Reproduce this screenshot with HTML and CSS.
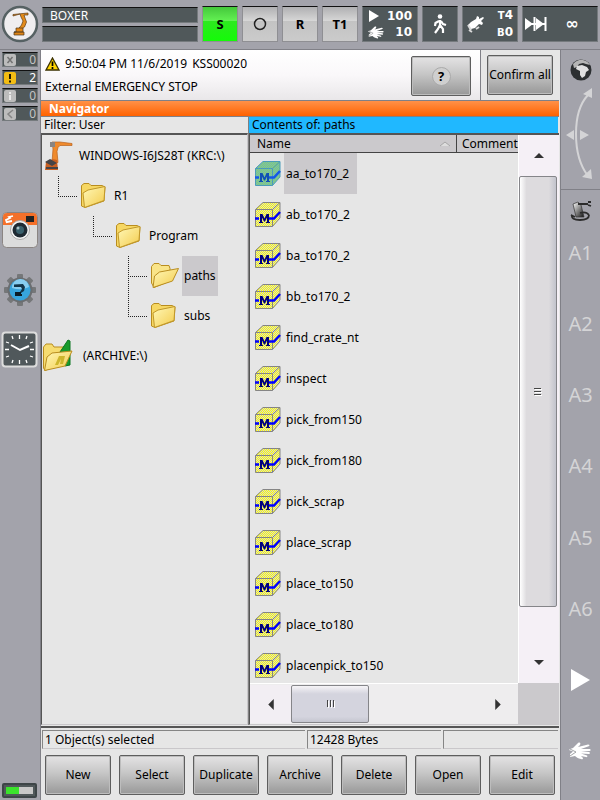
FILE: index.html
```html
<!DOCTYPE html>
<html lang="en">
<head>
<meta charset="utf-8">
<meta name="viewport" content="width=device-width, initial-scale=1">
<title>Navigator</title>
<link rel="stylesheet" href="styles.css">
</head>
<body>
<svg class="defs" width="0" height="0" aria-hidden="true">
  <defs>
    <linearGradient id="gold" x1="0" y1="0" x2="1" y2="1"><stop offset="0" stop-color="#fff8b8"/><stop offset="1" stop-color="#f3cb4c"/></linearGradient>
    <linearGradient id="steel" x1="0" y1="0" x2="1" y2="1"><stop offset="0" stop-color="#fff"/><stop offset="1" stop-color="#111"/></linearGradient>
    <pattern id="dither" width="2" height="2" patternUnits="userSpaceOnUse"><rect width="2" height="2" fill="#d6d6d0"/><rect width="1" height="1" fill="#ff0"/><rect x="1" y="1" width="1" height="1" fill="#ff0"/></pattern>
    <pattern id="dither-on" width="2" height="2" patternUnits="userSpaceOnUse"><rect width="2" height="2" fill="#88d070"/><rect width="1" height="1" fill="#73b9b4"/><rect x="1" y="1" width="1" height="1" fill="#73b9b4"/></pattern>
    <symbol id="folder" viewBox="0 0 28 26">
      <path d="M.5 2.500 3 .5h5l2 2h11l3 1.500L23 18 4 24.500.5 23z" fill="#f6d763" stroke="#b98d1f"/>
      <path d="M2 10 7 7l17-3.500-1 14L3.500 24.500z" fill="url(#gold)" stroke="#c1982a"/>
    </symbol>
    <symbol id="folder-open" viewBox="0 0 28 26">
      <path d="M.5 3.500 3 .5h5l2 2h8l1 3V18L3 24.500.5 20z" fill="#f9e488" stroke="#b98d1f"/>
      <path d="M2 24.500 3.500 13l5-4L27.500 5.500 21.500 18z" fill="url(#gold)" stroke="#b98d1f"/>
    </symbol>
    <symbol id="module" viewBox="0 0 26 26">
      <path d="M.5 7.500 8 .5h17v15.500L17.500 24.500H.5z" fill="url(#dither)"/>
      <path d="M.5 7.500H17.500V24.500H.5zM.5 7.500 8 .5H25V16l-7.500 8.500M17.500 7.500 25 .5" fill="none" stroke="#858585"/>
      <path d="M0 16.500h4M14 16.500h5l6-6.500" fill="none" stroke="#00f" stroke-width="2.500"/>
      <path d="M5 12h2.500L9.500 16.500 11.500 12H14v8h1v1h-4v-1h1v-4.500L10 19.500H9L7 15.500V20h1v1H4v-1h1z" fill="#00007d"/>
    </symbol>
    <symbol id="module-on" viewBox="0 0 26 26">
      <path d="M.5 7.500 8 .5h17v15.500L17.500 24.500H.5z" fill="url(#dither-on)"/>
      <path d="M.5 7.500H17.500V24.500H.5zM.5 7.500 8 .5H25V16l-7.500 8.500M17.500 7.500 25 .5" fill="none" stroke="#4b9bb9"/>
      <path d="M0 16.500h4M14 16.500h5l6-6.500" fill="none" stroke="#1458e8" stroke-width="2.500"/>
      <path d="M5 12h2.500L9.500 16.500 11.500 12H14v8h1v1h-4v-1h1v-4.500L10 19.500H9L7 15.500V20h1v1H4v-1h1z" fill="#1050b4"/>
    </symbol>
    <symbol id="hand" viewBox="0 0 22 18">
      <path d="M1 7 4 6l5-5c2-1 3 0 2 2L9 5l10-2.500c2 0 2 1.500 0 2L12 7h8.500c1.500 0 1.500 2 0 2H12l8 1c1.500.5 1 2 0 2l-8-.5 6 2c1 1 0 2-1 1.500L12 14l2 2c0 1.500-1 1.500-2 1-3-.5-5-2-6-3l-5 1v-3l3-2.500L0 8z" fill="#fff"/>
      <path d="M1 7l6 3-6 4" fill="none" stroke="#8a8d90" stroke-width=".8"/>
    </symbol>
  </defs>
</svg>

<div class="app">
  <header class="top">
    <div class="logo">
      <svg width="38" height="38" viewBox="0 0 38 38"><circle cx="19" cy="19" r="17" fill="#f0eef0" stroke="#566163" stroke-width="2.500"/><path d="M12 9.500 27 8v2h-4l1 3 1.500 4-2 5-4 3h-3l4-5 1.500-4-2-4-1-3-7 2z" fill="#e38b1b" stroke="#5b3a14" stroke-width=".7"/><path d="M15 23h7v4h1v3H13v-3h2z" fill="#df8517" stroke="#4c3517" stroke-width=".7"/><path d="M13 27h9" stroke="#43331f"/></svg>
    </div>
    <div class="names"><div class="name">BOXER</div><div class="name"></div></div>
    <button class="key key-on">S</button>
    <button class="key" aria-label="O"><svg width="14" height="14" viewBox="0 0 14 14"><circle cx="7" cy="7" r="5.500" fill="none" stroke="#222" stroke-width="1.500"/></svg></button>
    <button class="key">R</button>
    <button class="key">T1</button>
    <div class="tile speed">
      <svg width="12" height="12" viewBox="0 0 12 12"><path d="M1 0 11 6 1 12z" fill="#fff"/></svg><span>100</span>
      <svg width="16" height="13"><use href="#hand"/></svg><span>10</span>
    </div>
    <div class="tile walk">
      <svg width="14" height="20" viewBox="0 0 14 20"><circle cx="7" cy="2.500" r="2.300" fill="#fff"/><path d="M7 6v6M6 7 2.500 9 2 12M8 7l2 3 3 1M7 11l-2 4-3 4M7 11l3 4v4" fill="none" stroke="#fff" stroke-width="2.200"/></svg>
    </div>
    <div class="tile tool">
      <svg width="18" height="18" viewBox="0 0 18 18"><path d="M4 7 9 4l1-3 2 1v2l4-2 1 1-3 3 2 2-1 2-3-1-4 4-4 1-3-4z" fill="#fff"/><path d="M1 10l3 5M2 15l3 2M9 14l3-2" stroke="#dcdcdc" stroke-width="2"/></svg>
      <div class="tb"><span><small>T</small>4</span><span><small>B</small>0</span></div>
    </div>
    <div class="tile step">
      <svg width="22" height="14" viewBox="0 0 22 14"><path d="M0 1l8 6-8 6zM11 1l8 6-8 6z" fill="#fff"/><path d="M9.500 0v14M20.500 0v14M0 7h20" stroke="#fff" stroke-width="2"/></svg>
      <span>∞</span>
    </div>
  </header>

  <div class="body">
    <aside class="left">
      <div class="counts">
        <div class="count"><svg width="12" height="12" viewBox="0 0 12 12"><rect width="12" height="12" rx="2" fill="#bcbcbc"/><path d="M3.500 3l5 6m0-6-5 6" stroke="#737373" stroke-width="1.500"/></svg><span>0</span></div>
        <div class="count count-on"><svg width="12" height="12" viewBox="0 0 12 12"><rect width="12" height="12" rx="2" fill="#f3bd14"/><path d="M6 2v5m0 1.500v2" stroke="#221a00" stroke-width="2"/></svg><span>2</span></div>
        <div class="count"><svg width="12" height="12" viewBox="0 0 12 12"><rect width="12" height="12" rx="2" fill="#bcbcbc"/><path d="M6 2v2m0 1v5" stroke="#e8e8e8" stroke-width="2"/></svg><span>0</span></div>
        <div class="count"><svg width="12" height="12" viewBox="0 0 12 12"><rect width="12" height="12" rx="2" fill="#bcbcbc"/><path d="M9 2 4 6l4 4" fill="none" stroke="#858585" stroke-width="1.500"/></svg><span>0</span></div>
      </div>
      <div class="apps">
        <svg width="36" height="37" viewBox="0 0 36 37"><rect x=".5" y=".5" width="35" height="35" rx="4" fill="#dcdcdc" stroke="#8b8583"/><path d="M1 13V5q0-4 4-4h26q4 0 4 4v8z" fill="#f4702a"/><path d="M5 11 4 8l4-2-1-1 4-1M5 10l5-1" stroke="#fff" stroke-width="1.800" fill="none"/><rect x="24" y="4" width="8" height="6" fill="#222"/><circle cx="18" cy="18" r="9.500" fill="#f5f5f5" stroke="#aaa"/><circle cx="18" cy="18" r="7.500" fill="#1e2a33"/><circle cx="18" cy="18" r="4" fill="#39606c"/><circle cx="16" cy="16" r="1.500" fill="#a8c0c6"/></svg>
        <svg width="34" height="34" viewBox="-17 -17 34 34"><g fill="#757779"><rect x="-3" y="-16" width="6" height="32" rx="1"/><rect x="-16" y="-3" width="32" height="6" rx="1"/><rect x="-3" y="-16" width="6" height="32" rx="1" transform="rotate(45)"/><rect x="-3" y="-16" width="6" height="32" rx="1" transform="rotate(-45)"/></g><circle r="12.500" fill="#6a6d70"/><circle r="10.500" fill="#37a4dc"/><path d="M-8-2A8 8 0 0 1 9-3q-8 4-17 1z" fill="#87cdf0"/><path d="M-6-5.500 3-6l2 3-1 4-3 2-1-1 2-3-1-2-7 0z" fill="#12354a"/><path d="M-5 2h6v2h1v2h-7z" fill="#0b1c26"/></svg>
        <svg width="37" height="37" viewBox="0 0 37 37"><rect x="1.500" y="1.500" width="34" height="34" rx="3" fill="#50585b" stroke="#dcdcdc" stroke-width="2"/><g stroke="#fff" stroke-width="1.300"><path d="M18.500 4v4m0 21v4M4 18.500h4m21 0h4M11 5l1 3m14-3-1 3M5 11l3 1M5 26l3-1M32 11l-3 1m3 14-3-1M11 32l1-3m14 3-1-3"/><path d="M10 14l9 5 9-4" fill="none" stroke-width="2"/></g></svg>
      </div>
      <div class="battery"><span></span></div>
    </aside>

    <main class="main">
      <section class="message">
        <div class="msg">
          <div class="msg-text">
            <p><svg width="15" height="14" viewBox="0 0 15 14"><path d="M7.500 1 14 13H1z" fill="#ffd400" stroke="#3b3100" stroke-width="1.300"/><path d="M7.500 4.500V9m0 1v2" stroke="#000" stroke-width="1.700"/></svg><span>9:50:04 PM 11/6/2019</span><span>KSS00020</span></p>
            <p>External EMERGENCY STOP</p>
          </div>
          <button class="btn help" aria-label="Help"><span>?</span></button>
        </div>
        <div class="confirm"><button class="btn">Confirm all</button></div>
      </section>
      <h1 class="title">Navigator</h1>
      <div class="panes">
        <section class="pane tree-pane">
          <h2 class="caption">Filter: User</h2>
          <div class="well">
            <ul class="tree">
              <li><div class="node"><svg class="robot" width="31" height="32" viewBox="0 0 31 32"><path d="M9 2h8l12 1.500v2H17l-2 2-1 4 1 11H9L10 9z" fill="#ef8a2d" stroke="#b9621c" stroke-width=".7"/><path d="M7 2h5v5H7z" fill="#8a8583"/><path d="M3 22q5-4 11-2l1 10H2z" fill="#c85f22"/><path d="M2 22l5-3 7 4-5 3zM3 27h12v2H3z" fill="#454447"/></svg><span>WINDOWS-I6JS28T (KRC:\)</span></div>
                <ul>
                  <li><div class="node"><i class="elbow"></i><svg width="28" height="26"><use href="#folder"/></svg><span>R1</span></div>
                    <ul>
                      <li><div class="node"><i class="elbow"></i><svg width="28" height="26"><use href="#folder"/></svg><span>Program</span></div>
                        <ul>
                          <li><div class="node"><i class="elbow tee"></i><svg width="28" height="26"><use href="#folder-open"/></svg><span class="selected">paths</span></div></li>
                          <li><div class="node"><i class="elbow"></i><svg width="28" height="26"><use href="#folder"/></svg><span>subs</span></div></li>
                        </ul>
                      </li>
                    </ul>
                  </li>
                </ul>
              </li>
              <li><div class="node"><svg class="archive" width="32" height="34" viewBox="0 0 32 34"><path d="M.5 8 3 5h6l2 3h10v16L2 31.500.5 29z" fill="#f6dc70" stroke="#b98d1f"/><path d="M15 16 25 1l2 1v24l-5 1v-6l-5 1z" fill="#189a2c" stroke="#0c7620"/><path d="M1.500 31.500 4 18l5-4 20-2-7 15z" fill="url(#gold)" stroke="#b98d1f"/><path d="M12 26l4-9h6l-2 8h-3l1-5-3 6z" fill="#cdb62c"/></svg><span>(ARCHIVE:\)</span></div></li>
            </ul>
          </div>
        </section>
        <section class="pane list-pane">
          <h2 class="caption caption-on">Contents of: paths</h2>
          <div class="well scroller">
            <div class="view">
              <table class="files">
                <thead><tr><th><span class="col">Name<svg width="12" height="6" viewBox="0 0 12 6"><path d="M1 5 6 1l5 4" fill="#ddd" stroke="#999" stroke-width=".8"/></svg></span></th><th class="comment">Comment</th></tr></thead>
                <tbody>
                  <tr class="on"><td colspan="2"><div class="file"><svg width="26" height="26"><use href="#module-on"/></svg><span>aa_to170_2</span></div></td></tr>
                  <tr><td colspan="2"><div class="file"><svg width="26" height="26"><use href="#module"/></svg><span>ab_to170_2</span></div></td></tr>
                  <tr><td colspan="2"><div class="file"><svg width="26" height="26"><use href="#module"/></svg><span>ba_to170_2</span></div></td></tr>
                  <tr><td colspan="2"><div class="file"><svg width="26" height="26"><use href="#module"/></svg><span>bb_to170_2</span></div></td></tr>
                  <tr><td colspan="2"><div class="file"><svg width="26" height="26"><use href="#module"/></svg><span>find_crate_nt</span></div></td></tr>
                  <tr><td colspan="2"><div class="file"><svg width="26" height="26"><use href="#module"/></svg><span>inspect</span></div></td></tr>
                  <tr><td colspan="2"><div class="file"><svg width="26" height="26"><use href="#module"/></svg><span>pick_from150</span></div></td></tr>
                  <tr><td colspan="2"><div class="file"><svg width="26" height="26"><use href="#module"/></svg><span>pick_from180</span></div></td></tr>
                  <tr><td colspan="2"><div class="file"><svg width="26" height="26"><use href="#module"/></svg><span>pick_scrap</span></div></td></tr>
                  <tr><td colspan="2"><div class="file"><svg width="26" height="26"><use href="#module"/></svg><span>place_scrap</span></div></td></tr>
                  <tr><td colspan="2"><div class="file"><svg width="26" height="26"><use href="#module"/></svg><span>place_to150</span></div></td></tr>
                  <tr><td colspan="2"><div class="file"><svg width="26" height="26"><use href="#module"/></svg><span>place_to180</span></div></td></tr>
                  <tr><td colspan="2"><div class="file"><svg width="26" height="26"><use href="#module"/></svg><span>placenpick_to150</span></div></td></tr>
                </tbody>
              </table>
            </div>
            <div class="vbar">
              <button class="arrow" aria-label="Scroll up"><svg width="10" height="5" viewBox="0 0 12 6"><path d="M0 6 6 0l6 6z" fill="#333"/></svg></button>
              <div class="vthumb"><svg width="8" height="9" viewBox="0 0 8 9"><path d="M0 1.500h7m-7 3h7m-7 3h7" stroke="#444"/><path d="M1 2.500h7m-7 3h7m-7 3h7" stroke="#fff"/></svg></div>
              <button class="arrow arrow-down" aria-label="Scroll down"><svg width="10" height="5" viewBox="0 0 12 6"><path d="M0 0h12L6 6z" fill="#333"/></svg></button>
            </div>
            <div class="hbar">
              <button class="arrow" aria-label="Scroll left"><svg width="6" height="11" viewBox="0 0 6 12"><path d="M6 0v12L0 6z" fill="#333"/></svg></button>
              <div class="hthumb"><svg width="9" height="8" viewBox="0 0 9 8"><path d="M1.500 0v7m3-7v7m3-7v7" stroke="#444"/><path d="M2.500 1v7m3-7v7m3-7v7" stroke="#fff"/></svg></div>
              <button class="arrow arrow-right" aria-label="Scroll right"><svg width="6" height="11" viewBox="0 0 6 12"><path d="M0 0v12l6-6z" fill="#333"/></svg></button>
            </div>
          </div>
        </section>
      </div>
      <div class="status"><span>1 Object(s) selected</span><span>12428 Bytes</span><span></span></div>
      <nav class="actions">
        <button class="btn">New</button><button class="btn">Select</button><button class="btn">Duplicate</button><button class="btn">Archive</button><button class="btn">Delete</button><button class="btn">Open</button><button class="btn">Edit</button>
      </nav>
    </main>

    <aside class="right">
      <div class="world">
        <svg width="22" height="22" viewBox="0 0 22 22"><circle cx="11" cy="11" r="10.500" fill="#2c2f31"/><path d="M3 5Q8 0 13 1q5 1 7 5l-4-1-3-1-4 1-2 3-3 1z" fill="#b5b5b5"/><path d="M7 7l5-1 5 2 2 3-3 2-1 4-3 2-2-3V12l-4-2z" fill="#e0e0e0"/></svg>
        <svg class="arc" width="30" height="96" viewBox="0 0 30 96"><path d="M22 8C6 25 6 68 22 89" fill="none" stroke="#d4d4d6" stroke-width="2"/><path d="M17 7 26 1v10zM16 90l10 2-1-10zM0 48l8-5v10zM14 43l9 5-9 5z" fill="#d4d4d6"/></svg>
      </div>
      <div class="axes">
        <svg width="24" height="22" viewBox="0 0 24 22"><path d="M4 3l5-2 3 3 3 12H7z" fill="url(#steel)" stroke="#333" stroke-width=".7"/><path d="M9 3l10 0M19 1l3 0M19 4l3 1M3 14q-1 5 8 5 9 0 9-5M11 12q6-2 9 2M2 14l4 2" fill="none" stroke="#2c2c2c" stroke-width="1.800"/></svg>
        <ul>
          <li>A1</li><li>A2</li><li>A3</li><li>A4</li><li>A5</li><li>A6</li>
          <li><svg width="20" height="22" viewBox="0 0 20 22"><path d="M1 0 20 11 1 22z" fill="#fff"/></svg></li>
          <li><svg width="22" height="18"><use href="#hand"/></svg></li>
        </ul>
      </div>
    </aside>
  </div>
</div>
</body>
</html>
```
FILE: styles.css
```css
* { box-sizing: border-box; }
body { margin: 0; background: #a3a3ab; color: #000; font: 12px/16px "Noto Sans", "Open Sans", sans-serif; }
h1, h2, p, ul { margin: 0; padding: 0; font: inherit; }
ul { list-style: none; }
svg { display: block; flex: none; }
button { font: inherit; color: inherit; padding: 0; }
.defs { position: absolute; }

.app { display: flex; flex-direction: column; min-height: 100vh; }

/* top bar */
.top { display: flex; align-items: center; gap: 4px; height: 50px; padding: 0 2px 1px 1px; border-bottom: 1px solid #808087; }
.logo { width: 37px; }
.names { display: grid; gap: 3px; flex: 1; }
.name, .tile, .count { background: #50585a; border: 1px solid #757a7d; border-top: 1px solid #111; color: #fff; }
.name { height: 16px; padding: 0 7px; line-height: 15px; }
.key { width: 36px; height: 36px; border: 1px solid #8f8f93; border-top-color: #111; background: linear-gradient(#b0b0b2, #d6d6d6 40%, #c3c3c3 42%, #cbcbcb); font: bold 13px/16px "Noto Sans", sans-serif; display: grid; place-items: center; }
.key-on { background: linear-gradient(#44c83b, #62f052 40%, #2de91f 42%, #14fb08); }
.tile { height: 36px; display: flex; align-items: center; font: bold 12px/16px "DejaVu Sans", sans-serif; }
.speed { width: 56px; padding: 0 5px; display: grid; grid-template-columns: 16px 1fr; text-align: right; align-content: center; align-items: center; }
.walk { width: 36px; justify-content: center; }
.tool { width: 56px; justify-content: space-between; padding: 0 4px; }
.tb { display: grid; text-align: right; }
.tb small { font-size: 10px; }
.step { width: 76px; padding-left: 2px; }
.step span { flex: 1; text-align: center; font-size: 16px; }

.body { flex: 1; display: grid; grid-template-columns: 40px minmax(0, 1fr) 40px; }

/* left strip */
.left { display: flex; flex-direction: column; padding: 2px 2px 2px 1px; }
.counts { display: grid; gap: 3px; padding: 0 0 0 1px; }
.count { display: flex; justify-content: space-between; align-items: center; height: 15px; padding: 0 1px; line-height: 13px; color: #c4c4c4; }
.count-on { color: #fff; }
.apps { display: grid; gap: 24px; justify-items: center; padding-top: 91px; }
.battery { margin: auto 0 0 1px; height: 15px; width: 35px; padding: 2px; border: 2px solid #3d4547; border-radius: 2px; background: #50585a; }
.battery span { display: block; height: 7px; background: linear-gradient(90deg, #3be32c 50%, #c8c8c8 50%); }

/* main */
.main { display: flex; flex-direction: column; background: #e6e6e6; border-left: 1px solid #808087; padding-right: 1px; min-width: 0; }
.message { display: flex; height: 50px; }
.msg { flex: 1; display: flex; justify-content: space-between; padding: 0 9px 0 4px; background: linear-gradient(#fff, #faf8fa 50%, #e9e7e9); border-right: 1px solid #808087; }
.msg-text { display: grid; gap: 7px; align-content: center; }
.msg p { display: flex; gap: 5px; align-items: center; }
.btn { border: 1px solid #5e5e5e; border-radius: 2px; background: linear-gradient(#e4e3e4, #c6c6c6 45%, #989898); box-shadow: inset 0 0 0 1px #bdbdbd; height: 40px; white-space: nowrap; }
.help { width: 60px; margin-top: 6px; display: grid; place-items: center; }
.help span { width: 19px; height: 19px; border: 1px solid #aaa; border-radius: 50%; background: #cfcfcf; font: bold 13px/17px "Noto Sans", sans-serif; }
.confirm { padding: 5px 6px; }
.confirm .btn { width: 66px; }
.title { height: 17px; padding-left: 8px; border: solid #808087; border-width: 1px 0; background: linear-gradient(#ff9148, #ff6200); color: #fff; font-weight: bold; font-size: 12px; line-height: 15px; }
.panes { flex: 1; display: grid; grid-template-columns: 207px minmax(0, 1fr); min-height: 0; }
.pane { display: flex; flex-direction: column; min-width: 0; }
.caption { height: 16px; padding-left: 3px; }
.caption-on { background: #20b8ff; padding-left: 3px; margin-right: 1px; }
.well { flex: 1; border: solid #555; border-width: 2px 0 0 1px; border-bottom: 1px solid #c9c7ca; }
.tree-pane .well { border-right: 1px solid #c9c7ca; }
.list-pane { border-left: 1px solid #808080; }

.tree { padding: 1px 0 0 1px; }
.tree ul ul { margin-left: 35px; }
.tree > li > ul { margin-left: 15px; }
.node { display: flex; align-items: center; height: 40px; }
.node span { padding: 0 2px; margin-left: 3px; line-height: 40px; white-space: nowrap; }
.node .selected { background: #cbc9cc; }
.elbow { width: 19px; height: 40px; margin-right: 4px; background: repeating-linear-gradient(#222 0 1px, transparent 1px 2px) 0 0 / 1px 20px no-repeat, repeating-linear-gradient(90deg, #222 0 1px, transparent 1px 2px) 0 20px / 19px 1px no-repeat; }
.tee { background-size: 1px 40px, 19px 1px; }
.archive { margin-right: 3px; }

.scroller { display: grid; grid-template: minmax(0, 1fr) 41px / minmax(0, 1fr) 41px; background: #cbc9cc; }
.view { background: #e6e6e6; overflow: hidden; height: 548px; }
.files { width: 100%; border-spacing: 0; table-layout: fixed; }
.files th { height: 18px; padding: 0 5px 0 7px; background: #cbc9cc; border-bottom: 1px solid #444; text-align: left; font-weight: normal; line-height: 16px; }
.files .comment { width: 62px; border-left: 1px solid #444; padding: 0 0 0 5px; }
.col { display: flex; justify-content: space-between; align-items: center; }
.files td { padding: 0; }
.file { display: flex; align-items: center; gap: 3px; height: 41px; padding-left: 5px; }
.file span { line-height: 41px; padding: 0 8px 0 2px; }
.on span { background: #cbc9cc; }

.arrow { border: 0; background: none; display: grid; place-items: center; }
.vbar { display: flex; flex-direction: column; background: #f5f0f6; border-left: 1px solid #fff; }
.vbar .arrow { height: 41px; }
.vthumb { flex: none; height: 431px; margin-right: 2px; display: grid; place-items: center; border: 1px solid #858589; border-radius: 2px; background: linear-gradient(90deg, #fff, #dddbde 18%, #dddbde 80%, #c2c3cc); }
.vbar .arrow-down { margin: auto 0 0; }
.hbar { display: flex; background: #eeedee; border-top: 1px solid #fff; padding: 1px 0; }
.hbar .arrow { width: 41px; background: #f2eef3; }
.hthumb { width: 78px; display: grid; place-items: center; border: 1px solid #858589; border-radius: 2px; background: linear-gradient(#f6f4f7, #d4d4de 22%, #d4d4de 85%, #c5c6d0); }
.hbar .arrow-right { margin-left: auto; background: none; }

.status { display: grid; grid-template-columns: 263px 134px 1fr; gap: 2px; padding: 2px 1px 0; border-top: 2px solid #555; height: 24px; margin-top: 1px; }
.status span { padding-left: 2px; border: solid #858585; border-width: 1px 0 0 1px; border-bottom: 1px solid #c9c7ca; line-height: 17px; height: 19px; }
.actions { display: grid; grid-template-columns: repeat(7, 1fr); gap: 8px; padding: 5px 4px; }

/* right strip */
.right { display: flex; flex-direction: column; border-left: 1px solid #808087; color: #d4d4d6; }
.world { height: 140px; padding-top: 9px; border-bottom: 1px solid #808087; display: grid; justify-items: center; align-content: start; gap: 6px; }
.axes { flex: 1; display: flex; flex-direction: column; align-items: center; padding: 11px 0 13px; }
.axes ul { flex: 1; display: grid; grid-auto-rows: 1fr; margin-top: -6px; font-size: 20px; line-height: 24px; }
.axes li { display: grid; place-items: center; }
```
